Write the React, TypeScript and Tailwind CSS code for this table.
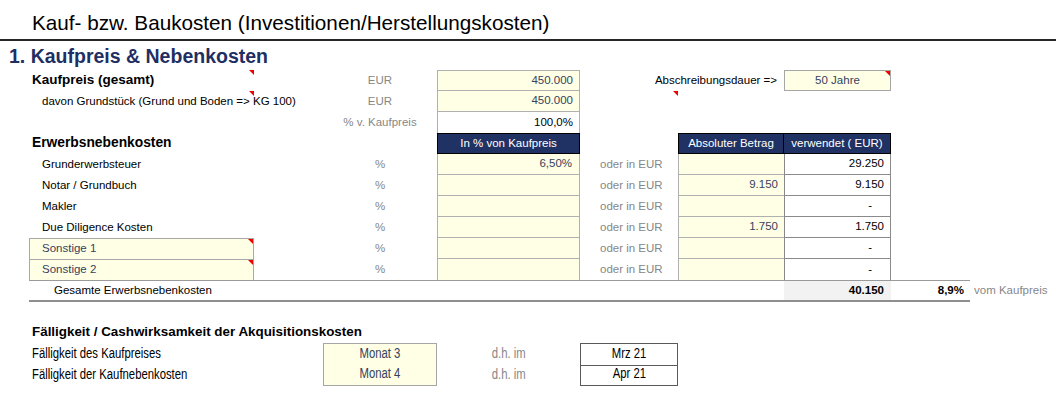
import React from "react";

const G = "grid grid-cols-[29px_225px_69px_114px_143px_98px_106px_107px_79px_1fr]";
const YEL = "bg-[#ffffe5]";
const INK = "text-[#34425f]";

function Tri() {
  return <span className="absolute right-0 top-0 h-0 w-0 border-l-[5px] border-t-[5px] border-l-transparent border-t-[#ee0000]" />;
}

function Unit({ children }: { children?: React.ReactNode }) {
  return <div className="flex items-center justify-center text-[#878787]">{children}</div>;
}

// condensed text, like Arial Narrow
function N({ children, center }: { children: React.ReactNode; center?: boolean }) {
  return (
    <span className={`inline-block whitespace-nowrap scale-x-[0.82] ${center ? "origin-center" : "origin-left"}`}>{children}</span>
  );
}

const rows = [
  { label: "Grunderwerbsteuer", pct: "6,50%", abs: "", used: "29.250" },
  { label: "Notar / Grundbuch", pct: "", abs: "9.150", used: "9.150" },
  { label: "Makler", pct: "", abs: "", used: "-" },
  { label: "Due Diligence Kosten", pct: "", abs: "1.750", used: "1.750" },
  { label: "Sonstige 1", pct: "", abs: "", used: "-", box: true },
  { label: "Sonstige 2", pct: "", abs: "", used: "-", box: true },
];

export default function App() {
  return (
    <div className="h-[400px] w-[1056px] overflow-hidden bg-white font-['Liberation_Sans',Arial,sans-serif] text-[11.5px] text-black">
      {/* Title */}
      <div className="h-[41px] border-b-2 border-[#262626] pl-[32px] pt-[12px] text-[20.7px] leading-[21px]">
        Kauf- bzw. Baukosten (Investitionen/Herstellungskosten)
      </div>
      <div className="h-[29px] pl-[9px] pt-[5px] text-[19.5px] font-bold leading-[20px] text-[#1f2f63]">
        1. Kaufpreis &amp; Nebenkosten
      </div>

      {/* Kaufpreis */}
      <div className={G + " h-[21px]"}>
        <div />
        <div className="relative flex items-center pl-[3px] text-[13.5px] font-bold">
          Kaufpreis (gesamt)
          <Tri />
        </div>
        <div />
        <Unit>EUR</Unit>
        <div className={`flex items-center justify-end border border-[#b0b0b0] pr-[6px] ${YEL} ${INK}`}>450.000</div>
        <div className="col-span-2 flex items-center justify-end whitespace-nowrap pr-[7px]">Abschreibungsdauer =&gt;</div>
        <div className={`relative flex items-center justify-center border border-[#a6a6a6] ${YEL} ${INK}`}>
          50 Jahre
          <Tri />
        </div>
      </div>
      <div className={G + " h-[21px]"}>
        <div />
        <div className="relative flex items-center whitespace-nowrap pl-[13px]">
          davon Grundstück (Grund und Boden =&gt; KG 100)
          <Tri />
        </div>
        <div />
        <Unit>EUR</Unit>
        <div className={`flex items-center justify-end border-x border-b border-[#b0b0b0] pr-[6px] ${YEL} ${INK}`}>450.000</div>
        <div className="relative">
          <Tri />
        </div>
      </div>
      <div className={G + " h-[21px]"}>
        <div />
        <div />
        <div />
        <div className="flex items-center justify-center whitespace-nowrap text-[#878787]">% v. Kaufpreis</div>
        <div className="flex items-center justify-end border-x border-[#b0b0b0] pr-[6px]">100,0%</div>
      </div>

      {/* Erwerbsnebenkosten header */}
      <div className={G + " h-[21px]"}>
        <div />
        <div className="flex items-center pl-[3px] text-[13.8px] font-bold">Erwerbsnebenkosten</div>
        <div />
        <div />
        <div className="flex items-center justify-center border border-black bg-[#203264] text-white">In % von Kaufpreis</div>
        <div />
        <div className="flex items-center justify-center border border-black bg-[#203264] text-white">Absoluter Betrag</div>
        <div className="flex items-center justify-center border-y border-r border-black bg-[#203264] text-white">verwendet ( EUR)</div>
      </div>

      {rows.map((r, i) => {
        const last = i === rows.length - 1;
        return (
          <div key={r.label} className={G + " h-[21px]"}>
            <div />
            {r.box ? (
              <div className={`relative flex items-center border-x border-t border-[#a8a8a8] pl-[12px] ${YEL} ${INK}`}>
                {r.label}
                <Tri />
              </div>
            ) : (
              <div className="flex items-center pl-[13px]">{r.label}</div>
            )}
            <div />
            <Unit>%</Unit>
            <div className={`flex items-center justify-end border-x border-[#b0b0b0] pr-[7px] ${last ? "" : "border-b"} ${YEL} ${INK}`}>
              {r.pct}
            </div>
            <div className="flex items-center pl-[20px] text-[#878787]">oder in EUR</div>
            <div className={`flex items-center justify-end border-l border-[#b0b0b0] pr-[6px] ${last ? "" : "border-b"} ${YEL} ${INK}`}>
              {r.abs}
            </div>
            <div
              className={`flex items-center justify-end border-x border-[#8a8a8a] ${last ? "" : "border-b"} ${
                r.used === "-" ? "pr-[18px]" : "pr-[6px]"
              }`}
            >
              {r.used}
            </div>
          </div>
        );
      })}

      {/* Gesamte */}
      <div className={G + " h-[22px]"}>
        <div />
        <div className="col-span-8 grid grid-cols-[225px_69px_114px_143px_98px_106px_107px_79px] border-t border-b-2 border-t-[#9a9a9a] border-b-[#8f8f8f]">
          <div className="flex items-center whitespace-nowrap pl-[25px]">Gesamte Erwerbsnebenkosten</div>
          <div />
          <div />
          <div />
          <div />
          <div />
          <div className="flex items-center justify-end bg-[#f2f2f2] pr-[7px] font-bold">40.150</div>
          <div className="flex items-center justify-end pr-[6px] font-bold">8,9%</div>
        </div>
        <div className="flex items-center pl-[4px] text-[#878787]">vom Kaufpreis</div>
      </div>

      {/* Fälligkeit */}
      <div className="h-[20px]" />
      <div className="text-[13.8px]">
        <div className={G + " h-[21px]"}>
          <div />
          <div className="col-span-3 flex items-end whitespace-nowrap pb-[1px] pl-[3px] text-[13.4px] font-bold">
            Fälligkeit / Cashwirksamkeit der Akquisitionskosten
          </div>
        </div>
        <div className={G + " h-[21px]"}>
          <div />
          <div className="col-span-2 flex items-center pl-[3px]">
            <N>Fälligkeit des Kaufpreises</N>
          </div>
          <div className={`flex items-center justify-center border border-[#a6a6a6] ${YEL} ${INK}`}>
            <N center>Monat 3</N>
          </div>
          <div className="flex items-center justify-center text-[#878787]">
            <N center>d.h. im</N>
          </div>
          <div className="flex items-center justify-center border border-[#5a5a5a]">
            <N center>Mrz 21</N>
          </div>
        </div>
        <div className={G + " h-[21px]"}>
          <div />
          <div className="col-span-2 flex items-center pl-[3px]">
            <N>Fälligkeit der Kaufnebenkosten</N>
          </div>
          <div className={`flex items-center justify-center border-x border-b border-[#a6a6a6] ${YEL} ${INK}`}>
            <N center>Monat 4</N>
          </div>
          <div className="flex items-center justify-center text-[#878787]">
            <N center>d.h. im</N>
          </div>
          <div className="flex items-center justify-center border-x border-b border-[#5a5a5a]">
            <N center>Apr 21</N>
          </div>
        </div>
      </div>
    </div>
  );
}
